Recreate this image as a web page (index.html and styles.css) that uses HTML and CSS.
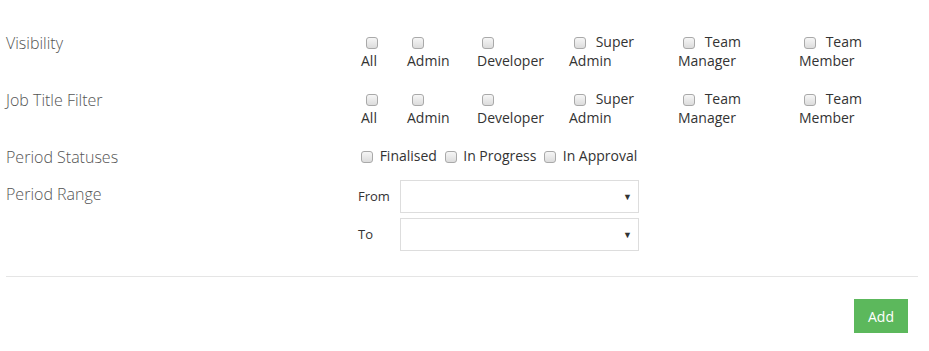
FILE: index.html
```html
<!DOCTYPE html>
<html>
<head>
<meta charset="utf-8">
<link rel="stylesheet" href="styles.css">
</head>
<body>
<form class="form">
  <div class="row row-check">
    <div class="label">Visibility</div>
    <div class="checks">
      <label class="opt"><input type="checkbox"> All</label>
      <label class="opt"><input type="checkbox"> Admin</label>
      <label class="opt"><input type="checkbox"> Developer</label>
      <label class="opt"><input type="checkbox"> Super Admin</label>
      <label class="opt"><input type="checkbox"> Team Manager</label>
      <label class="opt"><input type="checkbox"> Team Member</label>
    </div>
  </div>
  <div class="row row-check">
    <div class="label">Job Title Filter</div>
    <div class="checks">
      <label class="opt"><input type="checkbox"> All</label>
      <label class="opt"><input type="checkbox"> Admin</label>
      <label class="opt"><input type="checkbox"> Developer</label>
      <label class="opt"><input type="checkbox"> Super Admin</label>
      <label class="opt"><input type="checkbox"> Team Manager</label>
      <label class="opt"><input type="checkbox"> Team Member</label>
    </div>
  </div>
  <div class="row row-status">
    <div class="label">Period Statuses</div>
    <div class="statuses">
      <label class="st"><input type="checkbox"> Finalised</label>
      <label class="st"><input type="checkbox"> In Progress</label>
      <label class="st"><input type="checkbox"> In Approval</label>
    </div>
  </div>
  <div class="row row-range">
    <div class="label label-range">Period Range</div>
    <div class="range">
      <div class="range-line">
        <span class="range-lbl">From</span>
        <div class="select"><span class="arrow">▼</span></div>
      </div>
      <div class="range-line">
        <span class="range-lbl">To</span>
        <div class="select"><span class="arrow">▼</span></div>
      </div>
    </div>
  </div>
  <hr class="divider">
  <div class="actions">
    <button type="button" class="btn-add">Add</button>
  </div>
</form>
</body>
</html>
```

FILE: styles.css
```css
html, body {
  margin: 0;
  padding: 0;
  background: #fff;
}
body {
  font-family: "Open Sans", "Liberation Sans", sans-serif;
  font-size: 14px;
  line-height: 19px;
  color: #333;
}
.form {
  padding: 32px 11px 0 6px;
}
.row {
  display: grid;
  grid-template-columns: 351px 1fr;
}
.label {
  font-size: 16px;
  font-weight: 300;
  color: #555;
  line-height: 20px;
  padding-top: 1px;
}
.label-range {
  padding-top: 4px;
}
.row-check {
  margin-bottom: 19px;
}
.checks {
  display: grid;
  grid-template-columns: 46px 70px 92px 109px 121px 100px;
  padding-left: 4px;
}
.opt {
  display: block;
}
.opt:nth-child(1) { width: 40px; }
.opt:nth-child(2) { width: 60px; }
.opt:nth-child(3) { width: 76px; }
.opt:nth-child(4) { width: 90px; }
.opt:nth-child(5) { width: 100px; }
.opt:nth-child(6) { width: 100px; }
input[type="checkbox"] {
  -webkit-appearance: none;
  appearance: none;
  box-sizing: border-box;
  width: 12px;
  height: 12px;
  border: 1px solid #a9a9a9;
  border-radius: 3px;
  background: linear-gradient(#f6f6f6, #dcdcdc);
  display: inline-block;
  vertical-align: -2px;
  margin: 0 6px 0 5px;
}
.st input[type="checkbox"] {
  margin: 0 3px 0 4px;
}
.row-status {
  margin-bottom: 13px;
}
.range {
  display: flex;
  flex-direction: column;
  gap: 5px;
}
.range-line {
  display: flex;
  align-items: center;
}
.range-lbl {
  width: 42px;
  padding-left: 1px;
  font-size: 13px;
  color: #333;
}
.select {
  box-sizing: border-box;
  width: 239px;
  height: 33px;
  border: 1px solid #ddd;
  display: flex;
  align-items: center;
  justify-content: flex-end;
  padding-right: 6px;
}
.arrow {
  font-size: 9px;
  color: #333;
}
.divider {
  border: 0;
  border-top: 1px solid #e5e5e5;
  margin: 25px 0 22px 0;
}
.actions {
  display: flex;
  justify-content: flex-end;
  padding-right: 10px;
}
.btn-add {
  font-family: "Open Sans", "Liberation Sans", sans-serif;
  font-size: 14px;
  color: #fff;
  background: #5cb85c;
  border: 1px solid #5cb85c;
  border-radius: 0;
  width: 54px;
  height: 34px;
  padding: 0;
}
```
